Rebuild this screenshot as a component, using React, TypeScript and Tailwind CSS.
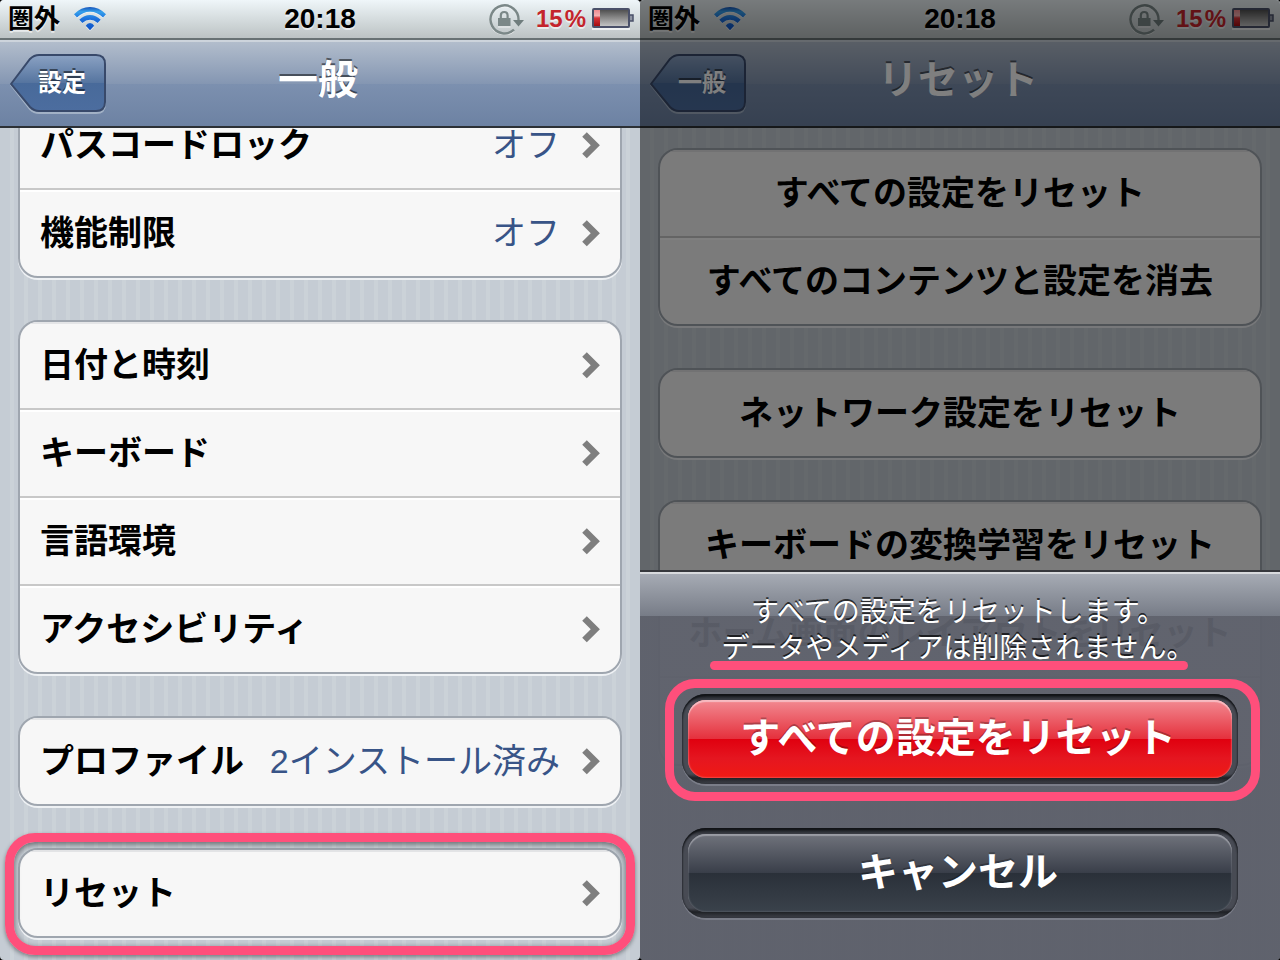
import type { ReactNode } from 'react';
import clsx from 'clsx';

interface SettingItem {
  label: string;
  value?: string;
}

const generalGroups: SettingItem[][] = [
  [
    { label: 'パスコードロック', value: 'オフ' },
    { label: '機能制限', value: 'オフ' },
  ],
  [{ label: '日付と時刻' }, { label: 'キーボード' }, { label: '言語環境' }, { label: 'アクセシビリティ' }],
  [{ label: 'プロファイル', value: '2インストール済み' }],
  [{ label: 'リセット' }],
];

const resetGroups = [
  ['すべての設定をリセット', 'すべてのコンテンツと設定を消去'],
  ['ネットワーク設定をリセット'],
  ['キーボードの変換学習をリセット', 'ホーム画面のレイアウトをリセット', ''],
];

const WifiIcon = () => (
  <svg className="w-8 h-6" viewBox="0 0 32 24" fill="none">
    <defs>
      <linearGradient id="wifi" x1="0" y1="0" x2="0" y2="24" gradientUnits="userSpaceOnUse">
        <stop offset="0" stopColor="#1552b8" />
        <stop offset="0.2" stopColor="#35a0ec" />
        <stop offset="0.5" stopColor="#1c70dc" />
        <stop offset="1" stopColor="#0b4fc4" />
      </linearGradient>
    </defs>
    <g transform="translate(0 1)" opacity="0.8" stroke="#fff" strokeWidth="4.5">
      <path d="M1.8 8.6Q16-4.600 30.200 8.600" />
      <path d="M7 13.800Q16 5.400 25 13.800" />
      <path d="M12 19Q16 14.500 20 19L16 23Z" fill="#fff" stroke="none" />
    </g>
    <path d="M0 7.300Q7 0 16 0T32 7.300L29 10.500Q23 4.800 16 4.800T3 10.500Z" fill="url(#wifi)" />
    <path d="M5.300 12.700Q10 8 16 8T26.700 12.700L23.600 15.900Q20 12.700 16 12.700T8.400 15.900Z" fill="url(#wifi)" />
    <path d="M11.800 18.800Q13.300 16 16 16T20.200 18.800L16 23.300Z" fill="url(#wifi)" />
  </svg>
);

const RotationLockIcon = () => (
  <svg className="w-9 h-8" viewBox="0 0 36 32" fill="none">
    <path d="M25.500 27.700A14 14 0 1 1 30.500 18" stroke="#fff" strokeWidth="2.500" opacity="0.7" />
    <path d="M26 26.700A14 14 0 1 1 30.500 17" stroke="#7b8888" strokeWidth="2.500" />
    <path d="M25 17H36L30.500 23.500Z" fill="#6f7d7d" />
    <path d="M12.800 15V12.500Q12.800 9 16.200 9T19.600 12.500V15" stroke="#7b8888" strokeWidth="2.200" />
    <rect x="10" y="15" width="12.500" height="8" fill="#7b8888" />
    <path d="M10 24H22.500" stroke="#fff" opacity="0.7" />
  </svg>
);

const BatteryIcon = () => (
  <svg className="w-[42px] h-[22px]" viewBox="0 0 42 22">
    <defs>
      <linearGradient id="cell" x1="0" y1="0" x2="0" y2="1">
        <stop offset="0" stopColor="#4a4a4a" />
        <stop offset="0.45" stopColor="#858585" />
        <stop offset="1" stopColor="#cacaca" />
      </linearGradient>
      <linearGradient id="charge" x1="0" y1="0" x2="0" y2="1">
        <stop offset="0" stopColor="#f08a8f" />
        <stop offset="0.35" stopColor="#f3b0b3" />
        <stop offset="0.5" stopColor="#d8343a" />
        <stop offset="1" stopColor="#a30c10" />
      </linearGradient>
    </defs>
    <rect x="0" y="20" width="38" height="2" fill="#fff" opacity="0.7" />
    <rect x="1" y="1" width="36" height="18" rx="1" fill="url(#cell)" stroke="#4a5069" strokeWidth="2" />
    <rect x="2" y="2" width="6" height="16" fill="url(#charge)" />
    <path d="M38 7H41V13H38" fill="#8f95a3" stroke="#4a5069" strokeWidth="1.500" />
  </svg>
);

const Chevron = () => (
  <svg className="w-[18px] h-7 shrink-0" viewBox="0 0 18 28" fill="none" aria-hidden="true">
    <path d="M2.500 3.500L13.300 14.200L2.500 25" stroke="#7e7e7e" strokeWidth="6.500" />
  </svg>
);

const StatusBar = () => (
  <header className="grid grid-cols-[1fr_auto_1fr] items-center h-10 px-2 border-b-2 border-[#687274] bg-linear-to-b from-[#eff6f9] to-[#bcc3c4] text-black">
    <div className="flex items-center gap-3.5">
      <span className="text-[26px] leading-8 font-bold [text-shadow:0_2px_0_#ffffff99]">圏外</span>
      <WifiIcon />
    </div>
    <span className="text-[28px] leading-8 font-bold [text-shadow:0_2px_0_#ffffff99]">20:18</span>
    <div className="flex items-center justify-end -mr-0.5">
      <RotationLockIcon />
      <span className="ml-3 mr-1.5 text-[24px] leading-8 font-bold text-[#c4242b] [text-shadow:0_2px_0_#ffffff99]">
        15<span className="ml-0.5">%</span>
      </span>
      <BatteryIcon />
    </div>
  </header>
);

const NavBar = ({ back, title }: { back: string; title: string }) => (
  <nav className="grid grid-cols-[1fr_auto_1fr] items-center h-22 px-2.5 border-t-2 border-b-2 border-t-[#cdd4dc] border-b-[#2c3035] bg-[linear-gradient(#b2bdcc,#8496b2_50%,#7c90af_50%,#6d82a3)] text-white">
    <button type="button" className="relative w-24 h-[60px] pl-2 pb-0.5 text-[24px] leading-8 font-bold [text-shadow:0_-2px_0_#00000080]">
      <svg className="absolute inset-0 w-24 h-[60px]" viewBox="0 0 96 60" fill="none" aria-hidden="true">
        <defs>
          <linearGradient id="back" x1="0" y1="0" x2="0" y2="1">
            <stop offset="0" stopColor="#8ba2c3" />
            <stop offset="0.5" stopColor="#55749f" />
            <stop offset="0.5" stopColor="#486a9a" />
            <stop offset="1" stopColor="#4c6d9f" />
          </linearGradient>
        </defs>
        <path d="M1 31L20 6Q24 2 29 2H86Q95 2 95 11V50Q95 59 86 59H29Q24 59 20 55Z" stroke="#c3cedb" strokeWidth="2" opacity="0.6" />
        <path d="M1 30L20 5Q24 1 29 1H86Q95 1 95 10V48Q95 57 86 57H29Q24 57 20 53Z" fill="url(#back)" stroke="#38496a" strokeWidth="2" />
      </svg>
      <span className="relative">{back}</span>
    </button>
    <h1 className="pr-1 pb-2 text-[40px] leading-12 font-bold [text-shadow:0_-2px_0_#00000080]">{title}</h1>
  </nav>
);

const Group = ({ children, highlighted }: { children: ReactNode; highlighted?: boolean }) => (
  <div className="relative">
    {highlighted && (
      <div className="absolute -top-[15px] -bottom-[17px] -inset-x-[13px] rounded-[30px] border-9 border-[#ff4f7b] shadow-[0_2px_4px_#0006,inset_0_2px_6px_#0008] pointer-events-none" />
    )}
    <ul className="rounded-[20px] border-2 border-[#9fa6af] bg-[#f7f7f7] overflow-hidden shadow-[0_2px_0_#eef1f4]">{children}</ul>
  </div>
);

const rowClass =
  'flex items-center w-full h-[86px] px-5 pb-0.5 text-[34px] leading-10 font-bold text-black whitespace-nowrap border-t-2 border-white';
const itemClass = 'border-b-2 border-[#c8c8c8] last:border-b-0 first:[&>button]:border-t-[#e4e5e7]';
const pageClass = 'flex flex-col gap-[42px] px-[18px]';
const stripes = 'bg-[repeating-linear-gradient(to_right,#c5ccd4_0_10px,#cbd2d8_10px_14px)]';

const GeneralScreen = () => (
  <section className={clsx('flex flex-col rounded-sm overflow-hidden', stripes)}>
    <StatusBar />
    <NavBar back="設定" title="一般" />
    <main className="flex-1 overflow-hidden">
      <div className={clsx(pageClass, '-mt-7')}>
        {generalGroups.map((group, i) => (
          <Group key={i} highlighted={i === generalGroups.length - 1}>
            {group.map((item) => (
              <li key={item.label} className={itemClass}>
                <button type="button" className={rowClass}>
                  <span className="flex-1 text-left">{item.label}</span>
                  {item.value && <span className="mr-0.5 font-normal text-[#385487]">{item.value}</span>}
                  <span className="ml-5">
                    <Chevron />
                  </span>
                </button>
              </li>
            ))}
          </Group>
        ))}
      </div>
    </main>
  </section>
);

const SheetButton = ({ label, danger }: { label: string; danger?: boolean }) => (
  <button
    type="button"
    className="block w-full p-1.5 rounded-[24px] bg-[linear-gradient(#17191d,#484b54_8px,#484b54_80px,#1f2125_84px,#41444c)] shadow-[0_2px_0_#7a7d88,inset_0_2px_2px_#111317,inset_0_0_2px_#1c1e22]"
  >
    <span
      className={clsx(
        'flex items-center justify-center h-[78px] pr-1 pb-0.5 rounded-[18px] text-[40px] leading-12 font-bold text-white [text-shadow:0_-2px_0_#00000040]',
        danger
          ? 'bg-[linear-gradient(#f28a92,#e5303c_50%,#e0000f_50%,#e51620_75%,#f01a14)] shadow-[inset_0_2px_1px_#f7bcc2,inset_0_0_2px_#f7a0a8]'
          : 'bg-[linear-gradient(#70737c,#393e49_50%,#2a3039_50%,#3a424b)] shadow-[inset_0_2px_1px_#9a9ca4,inset_0_0_2px_#7a7d86]',
      )}
    >
      {label}
    </span>
  </button>
);

const ActionSheet = () => (
  <div className="absolute inset-x-0 bottom-0 border-t-2 border-[#36383c]">
    <div className="px-[42px] pt-[23px] pb-[42px] bg-[linear-gradient(#d8dadd_0_2px,#a6abb4_2px,#777c87_44px,#5f626dee_44px)]">
      <p className="relative pr-1 pb-[27px] text-center text-[28px] leading-9 text-white [text-shadow:0_-2px_0_#000000b3] whitespace-nowrap">
        すべての設定をリセットします。
        <br />
        データやメディアは削除されません。
        <span className="absolute left-7 right-[50px] bottom-6 h-[9px] rounded-full bg-[#ff4f7b]" />
      </p>
      <div className="flex flex-col gap-11">
        <div className="relative">
          <div className="absolute -top-[15px] -bottom-[17px] -left-[17px] -right-[22px] rounded-[30px] border-9 border-[#ff4f7b] pointer-events-none" />
          <SheetButton label="すべての設定をリセット" danger />
        </div>
        <SheetButton label="キャンセル" />
      </div>
    </div>
  </div>
);

const ResetScreen = () => (
  <section className={clsx('relative flex flex-col rounded-sm overflow-hidden', stripes)}>
    <StatusBar />
    <NavBar back="一般" title="リセット" />
    <main className={clsx(pageClass, 'flex-1 pt-5')}>
      {resetGroups.map((group, i) => (
        <Group key={i}>
          {group.map((label, j) => (
            <li key={j} className={itemClass}>
              <button type="button" className={clsx(rowClass, 'justify-center')}>
                {label}
              </button>
            </li>
          ))}
        </Group>
      ))}
    </main>
    <div className="absolute inset-0 bg-black/50" />
    <ActionSheet />
  </section>
);

const App = () => (
  <div
    lang="ja"
    className="grid grid-cols-2 min-h-screen bg-black font-['Liberation_Sans','Noto_Sans_CJK_JP',sans-serif]"
  >
    <GeneralScreen />
    <ResetScreen />
  </div>
);

export default App;
